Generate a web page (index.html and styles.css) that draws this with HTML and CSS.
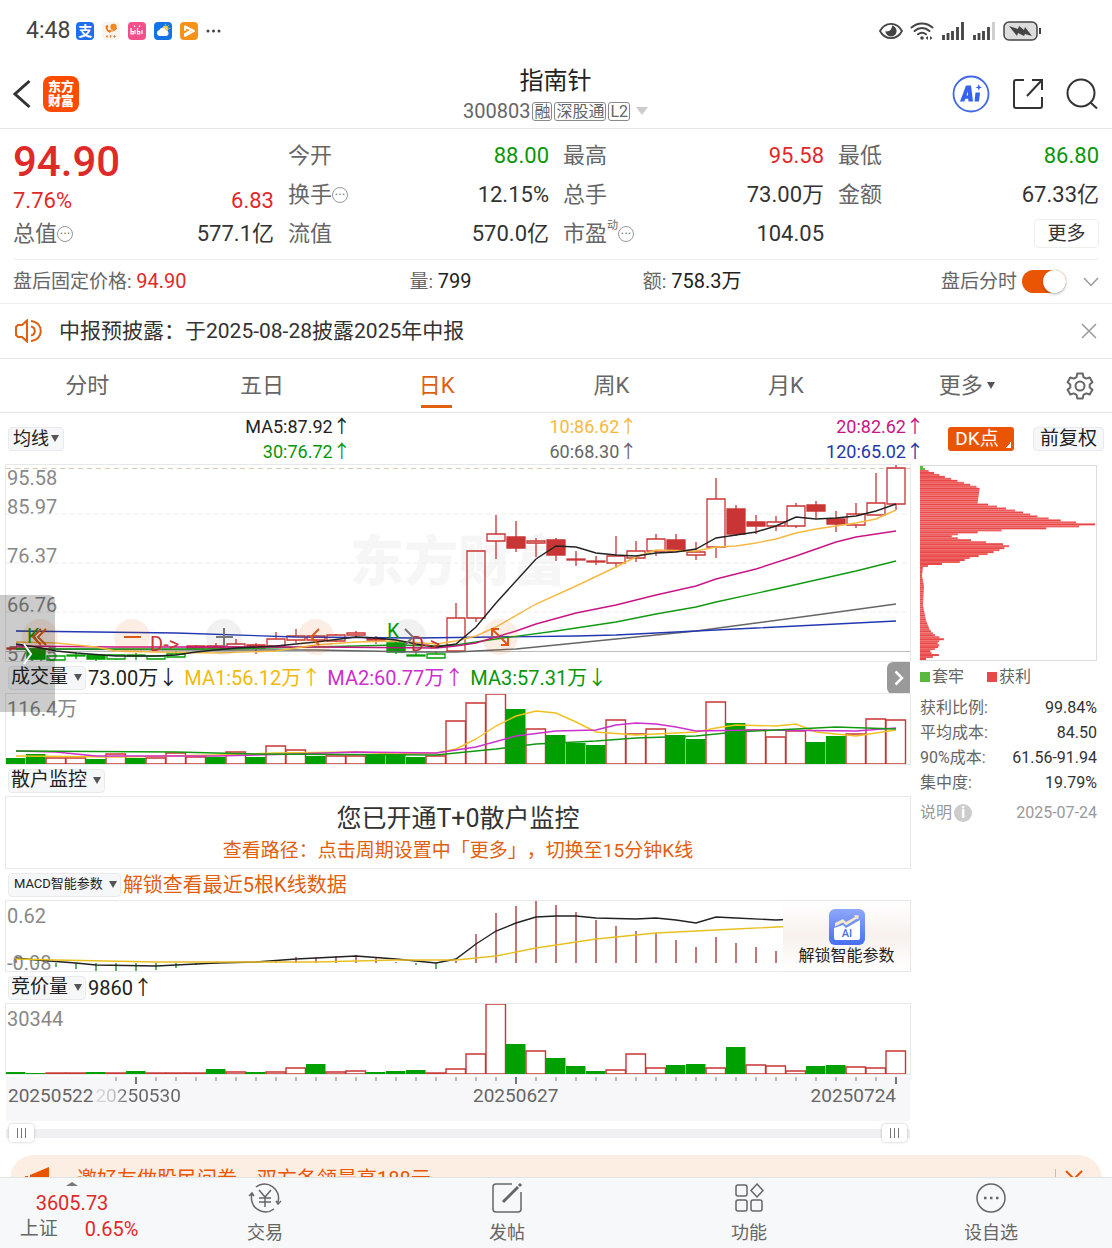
FILE: index.html
```html
<!DOCTYPE html>
<html lang="zh-CN">
<head>
    <meta charset="UTF-8">
    <meta name="viewport" content="width=device-width, initial-scale=1.0">
    <title>指南针 300803</title>
    <link rel="stylesheet" href="styles.css">
</head>
<body>
    <div class="status-bar">
        <span class="clock">4:48</span>
        <span class="app-icon blue">支</span>
        <span class="app-icon cream">
            <svg viewBox="0 0 18 18"><path d="M4 3.500c-1 2 0 5.500 3.500 7.200l2-1-1.500-2-1.200.5C6 7.500 5.500 6.500 5.700 5.500L6.500 5 5.800 3z" fill="#e8781e"/><circle cx="11.500" cy="5" r="3.200" fill="#f08a24"/><path d="M8.500 8.500c2 1 5 .5 6-2.500" stroke="#e8781e" fill="none"/><path d="M4 14.500h2M7.500 14h2.500M11 14.500h3M5 13v3M8.500 13v3M12.500 13v3" stroke="#e8935a"/></svg>
        </span>
        <span class="app-icon pink">
            <svg viewBox="0 0 18 18" fill="none" stroke="#fff" stroke-width="1.200"><path d="M3 6v6h2.200v-2.500H3M7 8v4M9.500 6v6h2.200v-2.500H9.500M14 8v4M6 3.500l1 1.500M12 3.500L11 5"/></svg>
        </span>
        <span class="app-icon sky">
            <svg viewBox="0 0 18 18"><circle cx="11.500" cy="6.500" r="3" fill="#f7c948"/><path d="M11.500 1.800v1M15 3l-.7.700M16.300 6.500h-1" stroke="#f7c948"/><path d="M5.500 14a3 3 0 0 1-.2-5.900 3.600 3.600 0 0 1 6.800.4A2.800 2.800 0 0 1 12.500 14z" fill="#fff"/></svg>
        </span>
        <span class="app-icon amber">
            <svg viewBox="0 0 18 18" fill="none" stroke="#fff" stroke-width="2" stroke-linejoin="round" stroke-linecap="round"><path d="M5 8V4.500L14 9l-9 5v-2l5-3"/></svg>
        </span>
        <svg width="15" height="4" viewBox="0 0 15 4" fill="#444"><circle cx="2" cy="2" r="1.500"/><circle cx="7.500" cy="2" r="1.500"/><circle cx="13" cy="2" r="1.500"/></svg>
        <span class="status-right">
            <svg width="24" height="18" viewBox="0 0 24 18"><path d="M1 9c5-9.500 17-9.500 22 0-5 9.500-17 9.500-22 0z" fill="none" stroke="#444" stroke-width="1.800"/><path d="M13 3.500A5.600 5.600 0 1 1 6.400 9c1.500 1 6.500.5 6.600-5.500z" fill="#444"/></svg>
            <svg width="24" height="18" viewBox="0 0 24 18" fill="none" stroke="#444" stroke-width="2" stroke-linecap="round"><path d="M1.500 5.500c6-5.500 15-5.500 21 0M4.500 9c4.500-4 10.500-4 15 0M8 12.300c2.500-2 5.500-2 8 0"/><circle cx="12" cy="16" r="1.800" fill="#444" stroke="none"/><path d="M18 14l-2.500 2 2.500 2zM20 14l2.500 2-2.500 2z" fill="#444" stroke="none"/></svg>
            <svg width="24" height="18" viewBox="0 0 24 18" stroke="#444" stroke-width="2.800"><path d="M2.500 18v-5M7 18v-7M11.500 18V9M16.500 18V5M21.500 18V0"/></svg>
            <svg width="24" height="18" viewBox="0 0 24 18" stroke="#444" stroke-width="2.800"><path d="M2.500 18v-5M7 18v-7M11.500 18V9M16.500 18V5"/><path d="M21.500 18V0" stroke="#ccc"/></svg>
            <svg width="38" height="20" viewBox="0 0 38 20"><rect x="1" y="1" width="33" height="18" rx="5" fill="#ddd" stroke="#444" stroke-width="1.500"/><path d="M6 5l9 3 1-3 5 4 1-3 7 9-7-2-1 2-6-3-1 3z" fill="#444"/><path d="M37 7v6" stroke="#444" stroke-width="2"/></svg>
        </span>
    </div>

    <header class="header">
        <div class="header-left">
            <button class="icon-btn" aria-label="返回"><svg width="18" height="30" viewBox="0 0 18 30" fill="none" stroke="#333" stroke-width="3"><path d="M16.500 2L2 15l14.500 13"/></svg></button>
            <span class="logo">东方<br>财富</span>
        </div>
        <div class="header-title">
            <h1>指南针</h1>
            <p>300803 <span class="tag">融</span><span class="tag">深股通</span><span class="tag">L2</span><i class="tri-down"></i></p>
        </div>
        <div class="header-right">
            <button class="icon-btn" aria-label="AI"><svg width="38" height="38" viewBox="0 0 38 38"><circle cx="19" cy="19" r="17.500" fill="none" stroke="#4169e8" stroke-width="1.800"/><path d="M8 26.500l6-16h5l2 16h-4.500l-.3-2.700h-2.800L12.200 26.500zM14.600 20.400h1.500l-.3-4z" fill="#3563f0"/><path d="M23.500 17.500h4.500l-1 9h-4.500z" fill="#3563f0"/><path d="M26.800 9l.9 2.600 2.300.8-2.300.9-.9 2.500-.9-2.500-2.300-.9 2.300-.8z" fill="#3563f0"/></svg></button>
            <button class="icon-btn" aria-label="分享"><svg width="32" height="32" viewBox="0 0 32 32" fill="none" stroke="#333" stroke-width="2"><path d="M12 2H4a2 2 0 0 0-2 2v24a2 2 0 0 0 2 2h24a2 2 0 0 0 2-2v-9M20 2h10v10M30 2L15 18"/></svg></button>
            <button class="icon-btn" aria-label="搜索"><svg width="32" height="32" viewBox="0 0 32 32" fill="none" stroke="#333" stroke-width="2"><circle cx="15" cy="15" r="13.500"/><path d="M24.500 24.500l6.500 6"/></svg></button>
        </div>
    </header>

    <main>
        <section class="quote">
            <div class="quote-col">
                <div class="price red">94.90</div>
                <div class="change red"><span>7.76%</span><span>6.83</span></div>
                <div class="cell"><span>总值<i class="more-dot">···</i></span><b>577.1亿</b></div>
            </div>
            <div class="quote-col">
                <div class="cell"><span>今开</span><b class="green">88.00</b></div>
                <div class="cell"><span>换手<i class="more-dot">···</i></span><b>12.15%</b></div>
                <div class="cell"><span>流值</span><b>570.0亿</b></div>
            </div>
            <div class="quote-col">
                <div class="cell"><span>最高</span><b class="red">95.58</b></div>
                <div class="cell"><span>总手</span><b>73.00万</b></div>
                <div class="cell"><span>市盈<sup>动</sup><i class="more-dot">···</i></span><b>104.05</b></div>
            </div>
            <div class="quote-col">
                <div class="cell"><span>最低</span><b class="green">86.80</b></div>
                <div class="cell"><span>金额</span><b>67.33亿</b></div>
                <div class="cell end"><button class="more-btn">更多</button></div>
            </div>
        </section>

        <section class="after-hours">
            <span>盘后固定价格: <b class="red">94.90</b></span>
            <span>量: <b>799</b></span>
            <span>额: <b>758.3万</b></span>
            <span class="after-toggle">
                <label for="after-switch">盘后分时</label>
                <input type="checkbox" id="after-switch" class="switch" checked>
                <button class="icon-btn" aria-label="展开"><svg width="16" height="10" viewBox="0 0 16 10" fill="none" stroke="#999" stroke-width="1.500"><path d="M1 1l7 7.500L15 1"/></svg></button>
            </span>
        </section>

        <section class="notice">
            <svg width="28" height="24" viewBox="0 0 28 24" fill="none" stroke="#e0600f" stroke-width="2"><path d="M12 1.500v21L7 18H3l-2-2V8l2-2h4zM16 7.500c5 1 5 8 0 9M16 2c13 1 13 19 0 20"/></svg>
            <a href="#">中报预披露：于2025-08-28披露2025年中报</a>
            <button class="icon-btn" aria-label="关闭"><svg width="16" height="16" viewBox="0 0 16 16" stroke="#999" stroke-width="1.500"><path d="M1 1l14 14M15 1L1 15"/></svg></button>
        </section>

        <nav class="tabs">
            <button>分时</button>
            <button>五日</button>
            <button class="active">日K</button>
            <button>周K</button>
            <button>月K</button>
            <button>更多<i class="caret"></i></button>
            <button class="gear" aria-label="设置"><svg width="28" height="28" viewBox="0 0 28 28" fill="none" stroke="#666" stroke-width="2" stroke-linejoin="round"><path d="M11.300 1.500h5.400l.8 3.600 2.700 1.500 3.500-1.100 2.700 4.700-2.700 2.400v2.800l2.700 2.400-2.700 4.700-3.500-1.100-2.700 1.500-.8 3.600h-5.400l-.8-3.600-2.700-1.500-3.500 1.100-2.700-4.700 2.700-2.400v-2.800l-2.700-2.400 2.700-4.700 3.500 1.100 2.700-1.500z"/><circle cx="14" cy="14" r="4.500"/></svg></button>
        </nav>

        <section class="ma-row">
            <button class="chip">均线<i class="caret"></i></button>
            <div class="ma-values">
                <span class="dark">MA5:87.92↑</span>
                <span class="yellow">10:86.62↑</span>
                <span class="magenta">20:82.62↑</span>
                <span class="green">30:76.72↑</span>
                <span class="grey">60:68.30↑</span>
                <span class="navy">120:65.02↑</span>
            </div>
            <button class="dk-btn">DK点</button>
            <button class="chip">前复权</button>
        </section>

        <div class="board">
            <div class="charts">
                <div class="chart k-chart">
                    <span class="watermark">东方财富</span>
                    <ul class="y-labels">
                        <li>95.58</li>
                        <li>85.97</li>
                        <li>76.37</li>
                        <li>66.76</li>
                        <li>57.15</li>
                    </ul>
                    <div class="chart-tools">
                        <button class="warm" aria-label="最左"><svg viewBox="0 0 36 36"><path d="M19 10l-8 8 8 8M24 10l-8 8 8 8"/></svg></button>
                        <button class="warm" aria-label="缩小"><svg viewBox="0 0 36 36"><path d="M10 18h17"/></svg></button>
                        <button class="cool" aria-label="放大"><svg viewBox="0 0 36 36"><path d="M10 18h17M18 9v18"/></svg></button>
                        <button class="warm" aria-label="左移"><svg viewBox="0 0 36 36"><path d="M21 10l-8 8 8 8"/></svg></button>
                        <button class="cool" aria-label="右移"><svg viewBox="0 0 36 36"><path d="M15 10l8 8-8 8"/></svg></button>
                        <button class="warm" aria-label="全屏"><svg viewBox="0 0 36 36"><path d="M10 17v-7h7M10 10l7 7M26 19v7h-7M26 26l-7-7"/></svg></button>
                    </div>
                    <svg id="k-plot" class="plot" viewBox="0 0 904 196" preserveAspectRatio="none"></svg>
                    <button class="drawer" aria-label="展开侧栏"><svg width="10" height="22" viewBox="0 0 10 22" fill="none" stroke="#fff" stroke-width="2"><path d="M1 1l7 10-7 10"/></svg></button>
                </div>

                <div class="sub-head">
                    <button class="chip">成交量<i class="caret"></i></button>
                    <span class="dark">73.00万↓</span>
                    <span class="gold">MA1:56.12万↑</span>
                    <span class="purple">MA2:60.77万↑</span>
                    <span class="green">MA3:57.31万↓</span>
                    <button class="side-toggle" aria-label="收起筹码"><svg width="10" height="16" viewBox="0 0 10 16" fill="none" stroke="#fff" stroke-width="2.500"><path d="M1.500 1.500L8 8l-6.500 6.500"/></svg></button>
                </div>
                <div class="chart sub-chart">
                    <span class="y-max">116.4万</span>
                    <svg id="vol-plot" class="plot" viewBox="0 0 904 70" preserveAspectRatio="none"></svg>
                </div>

                <div class="sub-head"><button class="chip">散户监控<i class="caret"></i></button></div>
                <div class="chart monitor">
                    <h2>您已开通T+0散户监控</h2>
                    <a href="#">查看路径：点击周期设置中「更多」，切换至15分钟K线</a>
                </div>

                <div class="sub-head">
                    <button class="chip small">MACD智能参数<i class="caret"></i></button>
                    <a href="#" class="unlock">解锁查看最近5根K线数据</a>
                </div>
                <div class="chart sub-chart">
                    <span class="y-max">0.62</span>
                    <span class="y-min">-0.08</span>
                    <svg id="macd-plot" class="plot" viewBox="0 0 904 70" preserveAspectRatio="none"></svg>
                    <button class="unlock-card">
                        <svg width="36" height="36" viewBox="0 0 36 36"><defs><linearGradient id="card" x2="0" y2="1"><stop stop-color="#8ea8fb"/><stop offset="1" stop-color="#476ff0"/></linearGradient></defs><rect width="36" height="36" rx="6" fill="url(#card)"/><path d="M5 19l9-3 3 3 14-8v18a2 2 0 0 1-2 2H7a2 2 0 0 1-2-2z" fill="#fff"/><path d="M6 14l8-4 3 3 9-5-1-2 5 .5-1 4-1-1-11 7-3-3-8 4z" fill="#f6e8c8"/><text x="18" y="28" text-anchor="middle" font-size="11" font-weight="500" fill="#476ff0">AI</text></svg>
                        <span>解锁智能参数</span>
                    </button>
                </div>

                <div class="sub-head">
                    <button class="chip">竞价量<i class="caret"></i></button>
                    <span class="dark">9860↑</span>
                </div>
                <div class="chart sub-chart">
                    <span class="y-max">30344</span>
                    <svg id="bid-plot" class="plot" viewBox="0 0 904 70" preserveAspectRatio="none"></svg>
                </div>

                <div class="axis">
                    <svg id="ticks" viewBox="0 0 904 8" preserveAspectRatio="none"></svg>
                    <div class="dates">
                        <span>20250522</span>
                        <span class="fading">20250530</span>
                        <span>20250627</span>
                        <span>20250724</span>
                    </div>
                </div>
                <div class="range">
                    <input type="range" aria-label="起始日期" value="0">
                    <input type="range" aria-label="结束日期" value="100">
                </div>
            </div>

            <aside class="cost">
                <svg id="cost-plot" viewBox="0 0 178 196" preserveAspectRatio="none"></svg>
                <div class="legend"><span class="lock">套牢</span><span class="gain">获利</span></div>
                <dl>
                    <dt>获利比例:</dt><dd>99.84%</dd>
                    <dt>平均成本:</dt><dd>84.50</dd>
                    <dt>90%成本:</dt><dd>61.56-91.94</dd>
                    <dt>集中度:</dt><dd>19.79%</dd>
                </dl>
                <div class="cost-foot"><a href="#">说明<i>i</i></a><span>2025-07-24</span></div>
            </aside>
        </div>

        <div class="banner">
            <svg width="28" height="24" viewBox="0 0 28 24" fill="#ea5504"><path d="M5 8L24 0v24L5 16zM0 9h3v6H0z"/></svg>
            <a href="#">邀好友做股民问卷，双方各领最高188元</a>
            <button class="icon-btn" aria-label="收起"><svg width="20" height="20" viewBox="0 0 20 20" fill="none" stroke="#ea5504" stroke-width="2"><path d="M2 2l8 8 8-8"/></svg></button>
        </div>
    </main>

    <nav class="bottom-nav">
        <a href="#" class="index red">
            <i class="tri-up"></i>
            <span>3605.73</span>
            <span class="index-row"><em>上证</em>0.65%</span>
        </a>
        <a href="#"><svg viewBox="0 0 36 32"><path d="M9 5a14 14 0 0 1 22 15M27 27A14 14 0 0 1 5 12M2 14l3-3 2 3M29 19l2 3 3-3M12 8l6 7 6-7M18 15v10M12 16h12M12 20h12"/></svg>交易</a>
        <a href="#"><svg viewBox="0 0 36 32"><path d="M23 2H7a3 3 0 0 0-3 3v22a3 3 0 0 0 3 3h22a3 3 0 0 0 3-3V10"/><path d="M14 20L29 5" stroke-width="3"/><path d="M30 4l2-2" stroke-width="3"/></svg>发帖</a>
        <a href="#"><svg viewBox="0 0 36 32"><rect x="5" y="3" width="11" height="11" rx="2"/><path d="M26 2l6 6.500-6 6.500-6-6.500z"/><rect x="5" y="18" width="11" height="11" rx="2"/><rect x="20" y="18" width="11" height="11" rx="2"/></svg>功能</a>
        <a href="#"><svg viewBox="0 0 36 32"><circle cx="18" cy="16" r="14"/><path d="M11 16h2.500M17 16h2.500M23 16h2.500" stroke-width="2.500"/></svg>设自选</a>
    </nav>

    <script src="script.js"></script>
</body>
</html>
```
FILE: styles.css
```css
* {
    box-sizing: border-box;
}
body {
    margin: 0;
    height: 100vh;
    display: flex;
    flex-direction: column;
    overflow: hidden;
    background: #fff;
    color: #333;
    font-family: Roboto, "Noto Sans CJK SC", sans-serif;
    font-size: 20px;
    line-height: 24px;
}
h1, h2, p, ul, dl, dd {
    margin: 0;
    padding: 0;
    font-weight: 400;
}
b, i, em {
    font-weight: 400;
    font-style: normal;
}
a {
    color: inherit;
    text-decoration: none;
}
button {
    margin: 0;
    padding: 0;
    border: 0;
    background: none;
    color: inherit;
    font: inherit;
    cursor: pointer;
}
svg {
    display: block;
    flex: none;
}
main {
    flex: 1;
    min-height: 0;
    overflow: hidden;
}
.icon-btn {
    display: flex;
}

.red { color: #e02a2a; }
.green { color: #0a960a; }
.dark { color: #222; }
.grey { color: #666; }
.yellow { color: #f5b942; }
.gold { color: #f0b90f; }
.magenta { color: #c71585; }
.purple { color: #cc2fcc; }
.navy { color: #2238a8; }

/* status bar */
.status-bar {
    flex: none;
    display: flex;
    align-items: center;
    height: 62px;
    padding: 0 71px 0 26px;
}
.clock {
    margin-right: 6px;
    font-size: 23px;
    color: #444;
}
.app-icon {
    display: flex;
    justify-content: center;
    width: 18px;
    height: 18px;
    margin-right: 8px;
    border-radius: 4px;
    color: #fff;
    font-size: 14px;
    font-weight: 700;
    line-height: 18px;
}
.app-icon svg {
    width: 18px;
    height: 18px;
}
.blue { background: #1e6ff0; }
.cream { background: #f8f4ef; }
.pink { background: #f4508c; }
.sky { background: #1272e6; }
.amber { background: #f59219; }
.status-right {
    display: flex;
    align-items: center;
    gap: 7px;
    margin-left: auto;
}

/* header */
.header {
    flex: none;
    display: grid;
    grid-template-columns: 1fr auto 1fr;
    align-items: center;
    height: 67px;
    padding: 0 14px 2px 13px;
    border-bottom: 1px solid #e6e6e6;
}
.header-left, .header-right {
    display: flex;
    align-items: center;
}
.header-left {
    gap: 12px;
}
.header-right {
    justify-content: flex-end;
    gap: 22px;
}
.logo {
    width: 36px;
    height: 36px;
    padding-top: 4px;
    border-radius: 8px;
    background: #fc4c02;
    color: #fff;
    font-size: 13px;
    font-weight: 900;
    line-height: 14px;
    text-align: center;
}
.header-title {
    padding-top: 2px;
    text-align: center;
}
.header-title h1 {
    font-size: 24px;
    line-height: 32px;
    color: #222;
}
.header-title p {
    display: flex;
    align-items: center;
    justify-content: center;
    gap: 2px;
    color: #666;
    line-height: 28px;
}
.tag {
    padding: 0 1px;
    border: 1px solid #888;
    border-radius: 3px;
    font-size: 16px;
    line-height: 17px;
}
.tri-down {
    margin-left: 4px;
    border: 6px solid transparent;
    border-top: 8px solid #ccc;
    border-bottom: 0;
}

/* quote */
.quote {
    display: grid;
    grid-template-columns: repeat(4, 1fr);
    gap: 14px;
    margin: 0 13px;
    padding: 7px 0 6px;
    border-bottom: 1px solid #eee;
    font-size: 22px;
}
.price {
    font-size: 42px;
    font-weight: 500;
    line-height: 52px;
}
.change {
    display: flex;
    justify-content: space-between;
    line-height: 26px;
}
.cell {
    display: flex;
    align-items: center;
    justify-content: space-between;
    height: 39px;
}
.cell.end {
    justify-content: flex-end;
}
.cell > span {
    display: flex;
    align-items: center;
    color: #666;
}
.cell sup {
    align-self: flex-start;
    font-size: 11px;
    line-height: 8px;
}
.more-dot {
    width: 16px;
    height: 16px;
    border: 1px solid #999;
    border-radius: 50%;
    color: #777;
    font-size: 14px;
    line-height: 14px;
    text-align: center;
}
.more-btn {
    width: 65px;
    height: 29px;
    border: 1px solid #eee;
    border-radius: 4px;
    font-size: 19px;
    line-height: 26px;
}

/* after hours */
.after-hours {
    display: grid;
    grid-template-columns: 36.5% 21.5% 1fr auto;
    align-items: center;
    height: 44px;
    padding: 0 13px;
    border-bottom: 1px solid #eee;
    color: #666;
    font-size: 19px;
}
.after-hours b {
    font-size: 20px;
}
.after-hours b:not(.red) {
    color: #222;
}
.after-toggle {
    display: flex;
    align-items: center;
    gap: 5px;
}
.after-toggle .icon-btn {
    margin-left: 12px;
}
.switch {
    appearance: none;
    width: 44px;
    height: 23px;
    margin: 0;
    border-radius: 12px;
    background: #ddd;
}
.switch::before {
    content: "";
    display: block;
    width: 23px;
    height: 23px;
    border-radius: 50%;
    background: #fff;
    box-shadow: 0 1px 3px rgba(0, 0, 0, 0.3);
}
.switch:checked {
    background: #ea5504;
}
.switch:checked::before {
    margin-left: 21px;
}

.notice {
    display: flex;
    align-items: center;
    gap: 16px;
    height: 55px;
    padding: 0 15px;
    border-bottom: 1px solid #e6e6e6;
    font-size: 21px;
}
.notice a {
    flex: 1;
}

/* period tabs */
.tabs {
    display: flex;
    height: 54px;
    border-bottom: 1px solid #e6e6e6;
    color: #666;
    font-size: 22px;
}
.tabs button {
    flex: 1;
    display: flex;
    align-items: center;
    justify-content: center;
}
.tabs .active {
    color: #e0600f;
    background: linear-gradient(#e0600f, #e0600f) center 46px / 31px 3px no-repeat;
}
.tabs .gear {
    flex: 0 0 64px;
}
.caret {
    display: inline-block;
    margin-left: 4px;
    border: 4px solid transparent;
    border-top: 7px solid #555;
    border-bottom: 0;
}
.tabs .caret {
    margin-right: -12px;
}

.ma-row {
    display: flex;
    align-items: center;
    height: 52px;
    padding: 0 8px;
    font-size: 19px;
}
.ma-values {
    flex: 1;
    display: grid;
    grid-template-columns: repeat(3, 1fr);
    font-size: 18px;
    line-height: 25px;
    text-align: right;
}
.chip {
    display: flex;
    align-items: center;
    height: 24px;
    padding: 0 4px 1px;
    border: 1px solid #e8eaee;
    border-radius: 4px;
    background: #f6f7f9;
    color: #222;
    font-size: 18px;
    line-height: 20px;
}
.chip .caret {
    margin-left: 2px;
}
.ma-row > .chip:last-child {
    padding: 0 6px 1px;
    font-size: 19px;
}
.dk-btn {
    width: 66px;
    height: 24px;
    margin: 0 19px 0 24px;
    padding-right: 8px;
    border-radius: 3px;
    background: linear-gradient(135deg, transparent 50%, #fff 50%) right 3px bottom 3px / 6px 6px no-repeat #ea5504;
    color: #fff;
}

/* charts */
.board {
    display: grid;
    grid-template-columns: 1fr 178px;
    gap: 9px;
    padding: 0 15px 0 6px;
}
.charts {
    min-width: 0;
}
.chart {
    position: relative;
    box-shadow: 0 0 0 1px #e8e8e8;
}
.k-chart {
    height: 196px;
}
.sub-chart {
    height: 70px;
}
.plot {
    position: relative;
    width: 100%;
    height: 100%;
}
.plot path, .plot line, .plot rect, .plot polyline {
    vector-effect: non-scaling-stroke;
}
.watermark {
    position: absolute;
    inset: 0;
    color: #f6f6f6;
    font-size: 54px;
    font-weight: 900;
    line-height: 196px;
    text-align: center;
}
.y-labels {
    position: absolute;
    top: 3px;
    left: 1px;
    display: grid;
    grid-template-rows: 20px 29px repeat(3, 49px);
    align-items: end;
    list-style: none;
    color: #888;
    line-height: 20px;
}
.y-max, .y-min {
    position: absolute;
    left: 1px;
    color: #888;
    line-height: 20px;
}
.y-max {
    top: 5px;
}
.y-min {
    bottom: -2px;
}
.chart-tools {
    position: absolute;
    z-index: 1;
    left: 16px;
    bottom: 6px;
    display: flex;
    gap: 56px;
}
.chart-tools button {
    width: 36px;
    height: 36px;
    border-radius: 50%;
}
.chart-tools svg {
    fill: none;
    stroke-width: 2;
}
.warm {
    background: rgba(234, 85, 4, 0.1);
    stroke: #dd5a14;
}
.cool {
    background: rgba(60, 60, 70, 0.07);
    stroke: #777;
}
.drawer {
    position: absolute;
    z-index: 2;
    left: -6px;
    top: 130px;
    display: flex;
    align-items: center;
    justify-content: center;
    width: 55px;
    height: 117px;
    border-radius: 0 6px 6px 0;
    background: rgba(0, 0, 0, 0.2);
}
.sub-head {
    display: flex;
    align-items: center;
    gap: 2px;
    height: 33px;
    padding-left: 2px;
}
.sub-head .chip {
    padding: 0 3px 1px 2px;
    font-size: 19px;
}
.sub-head .caret {
    margin-left: 6px;
}
.sub-head .small {
    padding-left: 5px;
    font-size: 13px;
}
.sub-head .dark, .sub-head .gold, .sub-head .purple {
    margin-right: 4px;
}
.unlock, .monitor a {
    color: #e0600f;
}
.side-toggle {
    display: flex;
    align-items: center;
    justify-content: center;
    width: 23px;
    height: 32px;
    margin-left: auto;
    border-radius: 6px 0 0 6px;
    background: #999;
}
.monitor {
    display: flex;
    flex-direction: column;
    align-items: center;
    justify-content: center;
    height: 71px;
    padding-top: 2px;
}
.monitor h2 {
    font-size: 25px;
    line-height: 34px;
}
.monitor a {
    font-size: 19px;
    line-height: 30px;
    text-spacing-trim: space-all;
}
.unlock-card {
    position: absolute;
    top: 0;
    right: 0;
    display: flex;
    flex-direction: column;
    align-items: center;
    gap: 1px;
    width: 127px;
    height: 70px;
    padding-top: 8px;
    background: linear-gradient(#fff, #f8f1ed 50%, #fff);
    color: #222;
    font-size: 16px;
    line-height: 20px;
}

.axis {
    height: 44px;
    margin-top: 3px;
    background: #f7f7f9;
    color: #666;
    font-size: 19px;
}
#ticks {
    width: 100%;
    height: 8px;
}
.dates {
    display: grid;
    grid-template-columns: auto auto 1fr auto;
    gap: 2px;
    padding: 0 14px 0 2px;
    line-height: 22px;
}
.dates :nth-child(3) {
    justify-self: center;
    padding-left: 40px;
}
.fading {
    background: linear-gradient(90deg, #ddd, #bbb 25%, #666 35%);
    background-clip: text;
    color: transparent;
}
.range {
    display: grid;
    align-items: center;
    height: 24px;
    padding: 0 3px;
    background: linear-gradient(#f0f0f3, #f0f0f3) center / 100% 9px no-repeat;
}
.range input {
    grid-area: 1 / 1;
    appearance: none;
    width: 100%;
    margin: 0;
    background: none;
    pointer-events: none;
}
.range input::-webkit-slider-thumb {
    appearance: none;
    width: 25px;
    height: 18px;
    border-radius: 4px;
    background: repeating-linear-gradient(90deg, #777 0 1px, #fff 1px 4px) center / 9px 10px no-repeat #fff;
    box-shadow: 0 0 3px rgba(0, 0, 0, 0.25);
    pointer-events: auto;
}

/* cost distribution */
.cost {
    color: #666;
    font-size: 16px;
}
#cost-plot {
    width: 100%;
    height: 196px;
    border: 1px solid #ddd;
    border-left: 0;
}
.legend {
    display: flex;
    gap: 22px;
    line-height: 32px;
}
.legend span::before {
    content: "";
    display: inline-block;
    width: 10px;
    height: 10px;
    margin: 0 2px 0 1px;
    background: #e84848;
}
.legend .lock::before {
    background: #5cb83e;
}
.cost dl {
    display: grid;
    grid-template-columns: auto 1fr;
    padding: 2px 0 0 1px;
    line-height: 25px;
}
.cost dd {
    color: #333;
    text-align: right;
}
.cost-foot {
    display: flex;
    justify-content: space-between;
    padding: 6px 0 0 1px;
    color: #999;
}
.cost-foot i {
    display: inline-block;
    width: 18px;
    margin-left: 2px;
    border-radius: 50%;
    background: #ccc;
    color: #fff;
    font-weight: 700;
    line-height: 18px;
    text-align: center;
}

.banner {
    display: flex;
    align-items: center;
    gap: 24px;
    height: 48px;
    margin: 10px 10px 0;
    padding: 0 18px 0 15px;
    border-radius: 24px;
    background: #fdeee4;
    color: #ea5504;
}
.banner a {
    flex: 1;
}
.banner .icon-btn {
    padding-left: 8px;
    border-left: 1px solid #f3b08c;
}

/* bottom nav */
.bottom-nav {
    flex: none;
    display: grid;
    grid-template-columns: 144px repeat(4, 1fr);
    height: 71px;
    border-top: 1px solid #e3e4e6;
    background: #f7f8fa;
    color: #666;
    font-size: 18px;
}
.bottom-nav a {
    display: flex;
    flex-direction: column;
    align-items: center;
    gap: 7px;
    padding-top: 4px;
}
.bottom-nav svg {
    width: 36px;
    height: 32px;
    fill: none;
    stroke: #666;
    stroke-width: 1.5;
}
.bottom-nav .index {
    gap: 0;
    font-size: 20px;
    line-height: 26px;
}
.index-row {
    display: flex;
    gap: 27px;
    padding-left: 14px;
}
.index-row em {
    color: #666;
    font-size: 19px;
}
.tri-up {
    margin-bottom: 4px;
    border: 6px solid transparent;
    border-bottom: 4px solid #777;
    border-top: 0;
}
```
FILE: script.js
```js
const RED = '#c93434';
const GREEN = '#00a000';
const STEP = 20;
const FIRST = 10;

const cx = i => FIRST + i * STEP;
const $ = id => document.getElementById(id);

// [kind, high, top, bottom, low] - r hollow red, R solid red, g hollow green, G solid green
const candles = [
    ['R', 182, 183, 184, 184], ['G', 183, 185, 194, 195], ['g', 190, 191, 195, 195], ['G', 187, 190, 191, 194],
    ['G', 190, 190, 194, 196], ['g', 190, 190, 194, 195], ['G', 188, 190, 191, 195], ['g', 191, 191, 194, 194],
    ['g', 186, 189, 192, 192], ['R', 180, 181, 183, 183], ['R', 178, 181, 183, 183], ['r', 174, 179, 182, 182],
    ['R', 178, 180, 183, 189], ['r', 167, 174, 181, 183], ['r', 164, 171, 175, 178], ['r', 170, 171, 175, 177],
    ['r', 169, 170, 176, 177], ['r', 166, 168, 170, 172], ['R', 171, 173, 175, 179], ['G', 177, 178, 187, 189],
    ['G', 187, 190, 191, 191], ['g', 187, 189, 193, 193], ['r', 138, 153, 186, 186], ['r', 86, 86, 153, 157],
    ['r', 50, 69, 76, 94], ['R', 56, 72, 83, 87], ['r', 73, 76, 78, 92], ['R', 73, 75, 90, 96],
    ['R', 86, 94, 94, 101], ['R', 91, 96, 97, 100], ['r', 71, 91, 98, 103], ['r', 76, 86, 93, 97],
    ['r', 69, 74, 86, 91], ['R', 69, 75, 86, 86], ['r', 77, 87, 90, 95], ['r', 13, 34, 82, 93],
    ['R', 40, 44, 69, 71], ['R', 50, 57, 61, 69], ['r', 51, 57, 61, 66], ['r', 38, 41, 61, 63],
    ['R', 36, 40, 46, 53], ['R', 46, 54, 59, 67], ['r', 38, 49, 60, 63], ['r', 8, 38, 50, 50],
    ['r', 0, 3, 39, 45]
];

// moving averages as [bar index, y]
const averages = [
    ['#666', [[0, 184], [10, 185], [15, 185], [20, 187], [22, 187], [25, 184], [30, 174], [32, 170], [34, 166], [37, 158], [40, 150], [44, 139]]],
    ['#2238b0', [[0, 166], [8, 168], [14, 172], [20, 173], [24, 172], [28, 171], [30, 170], [32, 168], [37, 163], [44, 156]]],
    ['#119911', [[0, 184], [5, 184], [10, 184], [15, 182], [19, 180], [21, 181], [22, 180], [24, 174], [27, 166], [30, 157], [32, 149], [34, 142], [35, 137], [38, 124], [40, 115], [42, 106], [44, 96]]],
    ['#c71585', [[0, 181], [5, 182], [15, 182], [21, 183], [22, 181], [23, 178], [25, 166], [26, 159], [28, 148], [30, 140], [32, 130], [34, 121], [35, 114], [37, 104], [39, 91], [41, 77], [42, 72], [43, 69], [44, 66]]],
    ['#f5b942', [[0, 177], [2, 178], [4, 182], [5, 186], [7, 187], [10, 188], [13, 186], [15, 180], [17, 177], [19, 176], [21, 179], [22, 176], [23, 171], [24, 162], [26, 139], [28, 121], [30, 102], [31, 92], [32, 85], [34, 86], [35, 82], [36, 81], [37, 78], [38, 74], [39, 68], [40, 64], [42, 58], [43, 54], [44, 45]]],
    ['#222', [[0, 179], [1, 182], [2, 186], [3, 188], [5, 191], [7, 191], [8, 190], [9, 187], [11, 183], [13, 181], [15, 177], [17, 172], [18, 173], [19, 175], [20, 179], [21, 182], [22, 179], [23, 162], [24, 138], [25, 116], [26, 94], [27, 81], [28, 82], [29, 88], [30, 90], [31, 91], [32, 88], [33, 87], [34, 84], [35, 73], [36, 70], [37, 67], [38, 61], [39, 52], [40, 54], [41, 53], [42, 51], [43, 46], [44, 39]]]
];

// bar heights, negative = green
const volume = [-6, -10, 6, 6, -5, 10, -6, 6, 11, 7, -7, 12, -7, 18, 14, -8, 8, 8, -10, -10, -7, 8, 43, 61, 70,
    -55, 35, -29, -21, -19, 44, 30, 35, -29, -25, 62, -41, 34, 27, 33, -22, -28, 30, 45, 44];
const volumeLines = [
    ['#f0c020', [[0, 62], [5, 63], [10, 61], [13, 59], [17, 58], [19, 60], [21, 59], [22, 55], [23, 45], [24, 32], [25, 22], [26, 17], [27, 19], [28, 28], [29, 38], [31, 41], [34, 38], [35, 34], [36, 31], [38, 32], [39, 30], [40, 38], [42, 42], [43, 39], [44, 36]]],
    ['#cc2fcc', [[0, 57], [2, 58], [4, 62], [10, 62], [14, 60], [17, 58], [21, 59], [23, 53], [25, 42], [27, 37], [29, 36], [30, 31], [31, 29], [32, 30], [33, 33], [34, 37], [37, 36], [42, 37], [44, 34]]],
    ['#119911', [[0, 57], [8, 58], [12, 60], [21, 61], [24, 55], [26, 50], [29, 47], [31, 44], [34, 42], [36, 38], [38, 36], [41, 33], [44, 35]]]
];

const bids = [-2, -1, 1, 1, -2, 1, -3, 1, 1, 1, -5, 2, -2, 2, 6, -10, 2, 3, -2, -3, -4, 1, 5, 20, 70,
    -30, 23, -16, -8, -3, 4, 20, 6, -9, -10, 6, -27, 9, 8, 3, -8, -9, 7, 6, 23];

const macd = [4, -1, -4, -6, -8, -8, -8, -7, -5, -2, -1, 0, 1, 2, 6, 6, 7, 8, 5, 1, -2, -6, 2, 29, 50, 57, 62,
    58, 51, 43, 37, 32, 30, 23, 16, 26, 20, 16, 12];
const macdLines = [
    ['#222', [[0, 57], [1, 59], [3, 62], [4, 64], [7, 65], [10, 62], [12, 61], [14, 58], [17, 55], [19, 58], [21, 62], [22, 58], [23, 43], [24, 30], [25, 22], [26, 16], [27, 15], [28, 15], [29, 17], [31, 18], [32, 17], [33, 19], [34, 22], [35, 16], [36, 17], [38, 19], [39, 18]]],
    ['#e8c020', [[0, 58], [2, 59], [7, 61], [11, 61], [15, 61], [19, 59], [22, 59], [24, 55], [25, 51], [26, 47], [27, 44], [28, 41], [29, 38], [30, 36], [32, 32], [34, 30], [36, 28], [39, 25]]]
];

// cost distribution outline as [y, width]
const cost = [[0, 3], [3, 6], [10, 25], [21, 60], [36, 58], [37, 64], [45, 100], [50, 118], [53, 135], [55, 148],
    [57, 166], [58, 176], [60, 160], [62, 127], [63, 95], [65, 69], [67, 47], [69, 29], [72, 38], [75, 58], [79, 92],
    [84, 80], [88, 68], [92, 50], [96, 40], [99, 13], [101, 3], [110, 2], [120, 4], [140, 3], [155, 6], [165, 10],
    [170, 15], [174, 24], [177, 17], [181, 20], [184, 15], [187, 8], [190, 19], [193, 10], [195, 2]];

function line([color, points]) {
    const path = points.map(([i, y]) => `${cx(i)},${y}`).join(' ');
    return `<polyline points="${path}" fill="none" stroke="${color}" stroke-width="1.4"/>`;
}

function candle([kind, high, top, bottom, low], i) {
    const color = kind.toLowerCase() === 'r' ? RED : GREEN;
    const solid = kind === 'R' || kind === 'G';
    const x = cx(i);
    return `<path d="M${x} ${high}V${top}M${x} ${bottom}V${low}" stroke="${color}" stroke-width="1.3"/>` +
        `<rect x="${x - 9}" y="${top}" width="18" height="${Math.max(bottom - top, 1)}" ` +
        `fill="${solid ? color : 'none'}" stroke="${color}" stroke-width="1.3"/>`;
}

function bars(values, base) {
    return values.map((v, i) => {
        const h = Math.abs(v);
        return v < 0
            ? `<rect x="${cx(i) - 10}" y="${base - h}" width="19.5" height="${h}" fill="${GREEN}"/>`
            : `<rect x="${cx(i) - 10}" y="${base - h}" width="19.5" height="${h}" fill="#fff" stroke="${RED}" stroke-width="1.4"/>`;
    }).join('');
}

const grid = [49, 98, 147].map(y => `<path d="M0 ${y}H904" stroke="#eee" stroke-dasharray="5 3"/>`).join('');
const mark = (x, y, text, color) => `<text x="${x}" y="${y}" font-size="20" fill="${color}">${text}</text>`;
$('k-plot').innerHTML = grid +
    '<path d="M0 3.5H904" stroke="#d8c8ae" stroke-dasharray="5 4"/><path d="M0 186.5H904" stroke="#bbb"/>' +
    candles.map(candle).join('') + averages.map(line).join('') +
    mark(21, 178, 'K', GREEN) + mark(381, 173, 'K', GREEN) +
    mark(144, 186, 'D-&gt;', RED) + mark(405, 186, 'D-&gt;', RED);

$('vol-plot').innerHTML = bars(volume, 70) + volumeLines.map(line).join('');
$('bid-plot').innerHTML = bars(bids, 70);
$('macd-plot').innerHTML = macd.map((v, i) =>
    `<path d="M${cx(i)} 62V${62 - v}" stroke="${v < 0 ? '#2a9a2a' : '#b04848'}" stroke-width="1.5"/>`
).join('') + macdLines.map(line).join('');

const major = [6, 25, 44];
$('ticks').innerHTML = candles.map((c, i) => i < 5 ? '' :
    `<path d="M${cx(i)} 0V${major.includes(i) ? 7 : 4}" stroke="${major.includes(i) ? '#777' : '#bbb'}" stroke-width="2"/>`
).join('');

function costWidth(y) {
    const n = cost.findIndex(p => p[0] >= y);
    if (n <= 0) return cost[0][1];
    const [y0, w0] = cost[n - 1];
    const [y1, w1] = cost[n];
    return w0 + (w1 - w0) * (y - y0) / (y1 - y0);
}
let costBars = '';
for (let y = 0; y < 195; y += 2) {
    const color = y < 3 ? '#5cb83e' : y % 4 ? '#e84848' : '#ef5c5c';
    costBars += `<rect x="1" y="${y}" width="${costWidth(y)}" height="2" fill="${color}"/>`;
}
$('cost-plot').innerHTML = costBars;
```
